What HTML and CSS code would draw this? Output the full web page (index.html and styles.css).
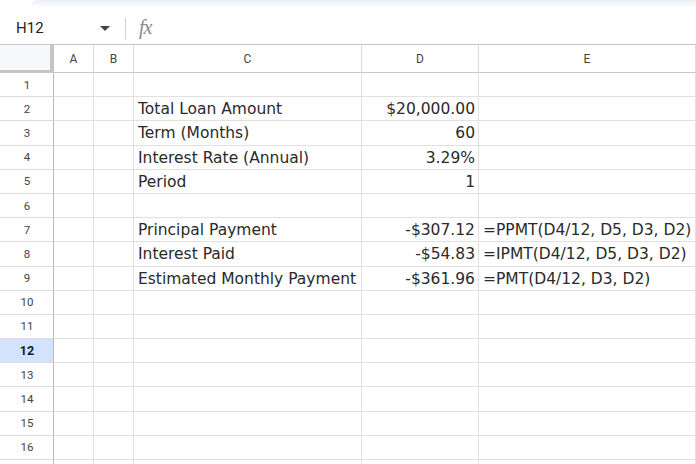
FILE: index.html
```html
<!DOCTYPE html>
<html>
<head>
<meta charset="utf-8">
<link rel="stylesheet" href="styles.css">
</head>
<body>
<div class="topbar">
  <div class="topstrip"></div>
  <div class="formula">
    <div class="namebox">H12</div>
    <svg class="caret" width="10" height="6" viewBox="0 0 10 6"><path d="M0 0h10L5 5z" fill="#444"/></svg>
    <div class="sep"></div>
    <span class="fx">fx</span>
  </div>
</div>
<div class="sheet">
  <div class="corner"></div><div class="ch">A</div><div class="ch">B</div><div class="ch">C</div><div class="ch">D</div><div class="ch">E</div>

  <div class="rh">1</div><div class="c"></div><div class="c"></div><div class="c"></div><div class="c"></div><div class="c"></div>
  <div class="rh">2</div><div class="c"></div><div class="c"></div><div class="c">Total Loan Amount</div><div class="c num">$20,000.00</div><div class="c"></div>
  <div class="rh">3</div><div class="c"></div><div class="c"></div><div class="c">Term (Months)</div><div class="c num">60</div><div class="c"></div>
  <div class="rh">4</div><div class="c"></div><div class="c"></div><div class="c">Interest Rate (Annual)</div><div class="c num">3.29%</div><div class="c"></div>
  <div class="rh">5</div><div class="c"></div><div class="c"></div><div class="c">Period</div><div class="c num">1</div><div class="c"></div>
  <div class="rh">6</div><div class="c"></div><div class="c"></div><div class="c"></div><div class="c"></div><div class="c"></div>
  <div class="rh">7</div><div class="c"></div><div class="c"></div><div class="c">Principal Payment</div><div class="c num">-$307.12</div><div class="c">=PPMT(D4/12, D5, D3, D2)</div>
  <div class="rh">8</div><div class="c"></div><div class="c"></div><div class="c">Interest Paid</div><div class="c num">-$54.83</div><div class="c">=IPMT(D4/12, D5, D3, D2)</div>
  <div class="rh">9</div><div class="c"></div><div class="c"></div><div class="c">Estimated Monthly Payment</div><div class="c num">-$361.96</div><div class="c">=PMT(D4/12, D3, D2)</div>
  <div class="rh">10</div><div class="c"></div><div class="c"></div><div class="c"></div><div class="c"></div><div class="c"></div>
  <div class="rh">11</div><div class="c"></div><div class="c"></div><div class="c"></div><div class="c"></div><div class="c"></div>
  <div class="rh sel">12</div><div class="c"></div><div class="c"></div><div class="c"></div><div class="c"></div><div class="c"></div>
  <div class="rh">13</div><div class="c"></div><div class="c"></div><div class="c"></div><div class="c"></div><div class="c"></div>
  <div class="rh">14</div><div class="c"></div><div class="c"></div><div class="c"></div><div class="c"></div><div class="c"></div>
  <div class="rh">15</div><div class="c"></div><div class="c"></div><div class="c"></div><div class="c"></div><div class="c"></div>
  <div class="rh">16</div><div class="c"></div><div class="c"></div><div class="c"></div><div class="c"></div><div class="c"></div>
  <div class="rh"></div><div class="c"></div><div class="c"></div><div class="c"></div><div class="c"></div><div class="c"></div>
</div>
</body>
</html>
```
FILE: styles.css
```css
* { box-sizing: border-box; }
html, body { margin: 0; padding: 0; background: #fff; overflow: hidden; width: 696px; height: 464px; }
body { font-family: "Liberation Sans", Arial, sans-serif; }

.topbar { height: 44px; }
.topstrip { height: 8px; margin-left: 30px; background: linear-gradient(#e9eef4, #f7f9fb 60%, #fff); border-top-left-radius: 8px; }
.formula { display: flex; align-items: center; height: 36px; padding-left: 16px; padding-top: 4px; }
.namebox { font-family: Roboto, "Liberation Sans", sans-serif; font-size: 15px; color: #1f1f1f; width: 84px; }
.caret { margin-top: 1px; }
.sep { width: 1px; height: 21px; background: #d0d0d0; margin-left: 15px; }
.fx { font-family: "Liberation Serif", serif; font-style: italic; font-size: 20px; color: #8a8a8a; margin-left: 13px; letter-spacing: -1px; margin-top: -2px; }

.sheet {
  display: grid;
  grid-template-columns: 54px 40px 40px 228px 117px 1fr;
  grid-template-rows: 28px;
  grid-auto-rows: 24.2px;
  border-top: 1px solid #c4c7c5;
  width: 696px;
}
.corner { background: #f8f9fa; border-right: 4px solid #c4c7c5; border-bottom: 3px solid #c4c7c5; }
.ch {
  font-family: Roboto, "Liberation Sans", sans-serif; font-size: 12px; color: #444;
  display: flex; align-items: center; justify-content: center;
  border-right: 1px solid #dadce0; border-bottom: 1px solid #c4c7c5;
  padding-top: 1px;
}
.rh {
  font-family: Roboto, "Liberation Sans", sans-serif; font-size: 11.5px; color: #444;
  display: flex; align-items: center; justify-content: center;
  border-right: 1px solid #b8b8b8; border-bottom: 1px solid #dadce0;
  padding-left: 1px;
}
.rh.sel { background: #d3e3fd; color: #0b1a33; font-weight: bold; font-size: 12.5px; }
.c {
  font-family: "DejaVu Sans", Verdana, sans-serif; font-size: 15.5px; color: #2a2a2a;
  border-right: 1px solid #e1e1e1; border-bottom: 1px solid #e1e1e1;
  white-space: nowrap; padding: 0 3px 0 4px; line-height: 24px;
  overflow: visible;
}
.num { text-align: right; }
```
